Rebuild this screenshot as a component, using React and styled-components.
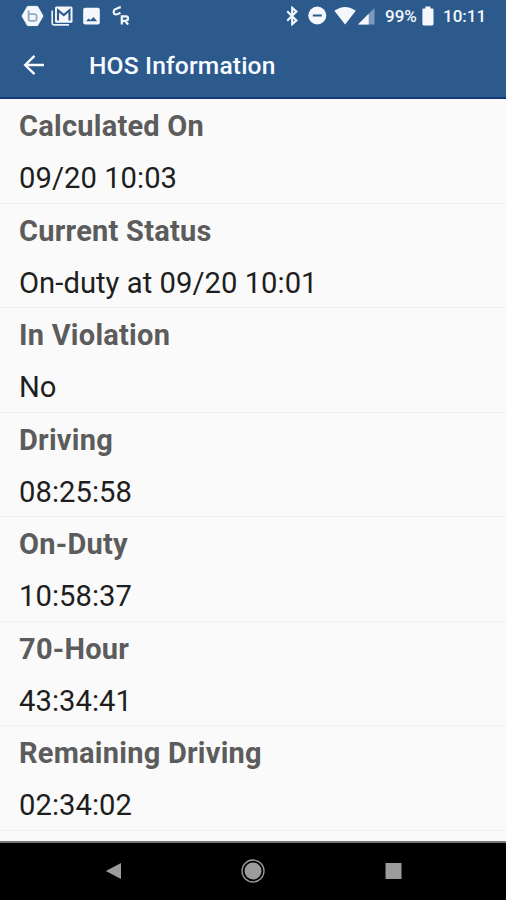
import React from "react";
import styled, { createGlobalStyle } from "styled-components";

const GlobalStyle = createGlobalStyle`
  * { box-sizing: border-box; }
  body { margin: 0; background: #fafafa; font-family: Roboto, sans-serif; }
`;

const Screen = styled.div`
  display: flex;
  flex-direction: column;
  width: 506px;
  height: 900px;
  overflow: hidden;
  background: #fafafa;
`;

const StatusBar = styled.div`
  display: flex;
  align-items: center;
  flex: none;
  height: 32px;
  padding: 0 20px 0 21px;
  background: #2c5a8d;
  color: #f4f8fc;
`;

const Icon = styled.svg`
  display: block;
  flex: none;
  margin-left: ${(p) => p.$gap || 0}px;
`;

const Spacer = styled.div`
  flex: 1;
`;

const StatusText = styled.span`
  flex: none;
  width: ${(p) => p.$width}px;
  margin-left: ${(p) => p.$gap}px;
  font-size: 17px;
  font-weight: 500;
  line-height: 32px;
  white-space: nowrap;
`;

const AppBar = styled.header`
  display: flex;
  align-items: center;
  flex: none;
  height: 67px;
  padding-left: 22px;
  background: #2c5a8d;
  border-bottom: 2px solid #123874;
  color: #f8fbff;
`;

const BackButton = styled.button`
  display: flex;
  padding: 0;
  border: 0;
  background: none;
  color: inherit;
`;

const Title = styled.h1`
  margin: 2px 0 0 43px;
  font-size: 24.6px;
  font-weight: 500;
  line-height: 32px;
  letter-spacing: 0.16px;
  white-space: nowrap;
`;

const List = styled.dl`
  flex: 1;
  margin: 0;
  overflow: hidden;
`;

const Row = styled.div`
  height: 104.5px;
  padding: 8px 19px 0;
  border-bottom: 1px solid #f1f1f1;
`;

const Label = styled.dt`
  height: 39px;
  color: #5c5c5c;
  font-size: 29px;
  font-weight: 700;
  line-height: 39px;
  letter-spacing: 0.24px;
  white-space: nowrap;
`;

const Value = styled.dd`
  height: 39px;
  margin: 13px 0 0;
  color: #1e1e1e;
  font-size: 29.2px;
  font-weight: 400;
  line-height: 39px;
  letter-spacing: 0.04px;
  white-space: nowrap;
`;

const NavBar = styled.nav`
  display: flex;
  align-items: center;
  flex: none;
  height: 59px;
  padding: 0 0 2px 105px;
  border-top: 2px solid #777;
  background: #000;
  color: #9c9c9c;
`;

const entries = [
  ["Calculated On", "09/20 10:03"],
  ["Current Status", "On-duty at 09/20 10:01"],
  ["In Violation", "No"],
  ["Driving", "08:25:58"],
  ["On-Duty", "10:58:37"],
  ["70-Hour", "43:34:41"],
  ["Remaining Driving", "02:34:02"],
];

const HexagonIcon = () => (
  <Icon width="23" height="22" viewBox="0 0 23 22">
    <path d="M6.5 1.4h10L22 11l-5.5 9.6h-10L1 11z" fill="#f4f8fc" stroke="#f4f8fc" strokeLinejoin="round" />
    <path d="M7.6 5.5v8.6a1.8 1.8 0 0 0 1.8 1.8h4.4a1.8 1.8 0 0 0 1.8-1.8v-3.2a1.8 1.8 0 0 0-1.8-1.8H7.6" fill="none" stroke="#8fa9c5" strokeWidth="1.8" />
  </Icon>
);

const MailIcon = () => (
  <Icon $gap={7} width="22" height="20" viewBox="0 0 22 20">
    <path d="M1.2 4.5v12.8a1.5 1.5 0 0 0 1.5 1.5H18" fill="none" stroke="#e9f1f8" strokeWidth="1.7" />
    <rect x="4" y="0.6" width="17.5" height="16.2" rx="1.5" fill="#f4f8fc" />
    <path d="M7 14.4V4.3l5.8 4.8 5.7-4.8v10.1" fill="none" stroke="#2c5a8d" strokeWidth="2.1" />
  </Icon>
);

const PictureIcon = () => (
  <Icon $gap={10} width="17" height="18" viewBox="0 0 17 18">
    <rect x="0.2" y="0.7" width="16.6" height="16.8" rx="2" fill="#f4f8fc" />
    <path d="M3 14.2l2.5-2.6 2 1.4 3-3 3.6 4.2z" fill="#2c5a8d" />
  </Icon>
);

const CarrierIcon = () => (
  <Icon $gap={12} width="18" height="20" viewBox="0 0 18 20" fill="none" stroke="#f4f8fc" strokeWidth="2.2">
    <path d="M8.8 1.3C6.2 1 5 3.2 2.4 3.6M3 3C.8 5.6 1.5 8.6 4 8.5c1.8 0 3-.7 4.4-1.8" />
    <path d="M9.8 18.6v-8.2h4a2.1 2.1 0 0 1 0 4.4H9.8M12.6 14.6l3.6 4" />
  </Icon>
);

const BluetoothIcon = () => (
  <Icon width="13" height="20" viewBox="0 0 13 20" fill="none" stroke="#f4f8fc" strokeWidth="2.1">
    <path d="M1.2 5.2l9.2 9.2-4.2 3.8V1.8l4.2 3.8-9.2 9.2" />
  </Icon>
);

const DoNotDisturbIcon = () => (
  <Icon $gap={9} width="19" height="20" viewBox="0 0 19 20">
    <circle cx="9.3" cy="9.5" r="9" fill="#f4f8fc" />
    <path d="M4.8 9.5h9" stroke="#2c5a8d" strokeWidth="2" />
  </Icon>
);

const WifiIcon = () => (
  <Icon $gap={7} width="22" height="20" viewBox="0 0 22 20">
    <path d="M.4 4.8Q11-2.8 21.8 4.8L11.1 18.5z" fill="#f4f8fc" />
  </Icon>
);

const SignalIcon = () => (
  <Icon $gap={2} width="17" height="20" viewBox="0 0 17 20">
    <path d="M16.5 2v16.5H0z" fill="#7b9abb" />
    <path d="M10.7 7.8v10.7H0z" fill="#f4f8fc" />
  </Icon>
);

const BatteryIcon = () => (
  <Icon $gap={5} width="12" height="20" viewBox="0 0 12 20">
    <path d="M3.4.4h5v2h1.8q1.3 0 1.3 1.3v14.1q0 1.6-1.3 1.6H1.7Q.4 19.4.4 17.8V3.7q0-1.3 1.3-1.3h1.7z" fill="#f4f8fc" />
  </Icon>
);

export default function App() {
  return (
    <>
      <GlobalStyle />
      <Screen>
        <StatusBar>
          <HexagonIcon />
          <MailIcon />
          <PictureIcon />
          <CarrierIcon />
          <Spacer />
          <BluetoothIcon />
          <DoNotDisturbIcon />
          <WifiIcon />
          <SignalIcon />
          <StatusText $gap={10} $width={32}>99%</StatusText>
          <BatteryIcon />
          <StatusText $gap={9} $width={43}>10:11</StatusText>
        </StatusBar>
        <AppBar>
          <BackButton aria-label="Back">
            <Icon width="24" height="24" viewBox="0 0 24 24" fill="none" stroke="currentColor" strokeWidth="2.4">
              <path d="M22 12H3.2M12.5 2.8L3.2 12l9.3 9.2" />
            </Icon>
          </BackButton>
          <Title>HOS Information</Title>
        </AppBar>
        <List>
          {entries.map(([label, value]) => (
            <Row key={label}>
              <Label>{label}</Label>
              <Value>{value}</Value>
            </Row>
          ))}
        </List>
        <NavBar>
          <Icon width="17" height="18" viewBox="0 0 17 18">
            <path d="M16 1v16L.8 9z" fill="currentColor" />
          </Icon>
          <Icon $gap={119} width="24" height="24" viewBox="0 0 24 24">
            <circle cx="12" cy="12" r="11" fill="none" stroke="currentColor" strokeWidth="1.3" />
            <circle cx="12" cy="12" r="8.5" fill="currentColor" />
          </Icon>
          <Icon $gap={120} width="17" height="16" viewBox="0 0 17 16">
            <rect x="0.5" width="16" height="16" fill="currentColor" />
          </Icon>
        </NavBar>
      </Screen>
    </>
  );
}
